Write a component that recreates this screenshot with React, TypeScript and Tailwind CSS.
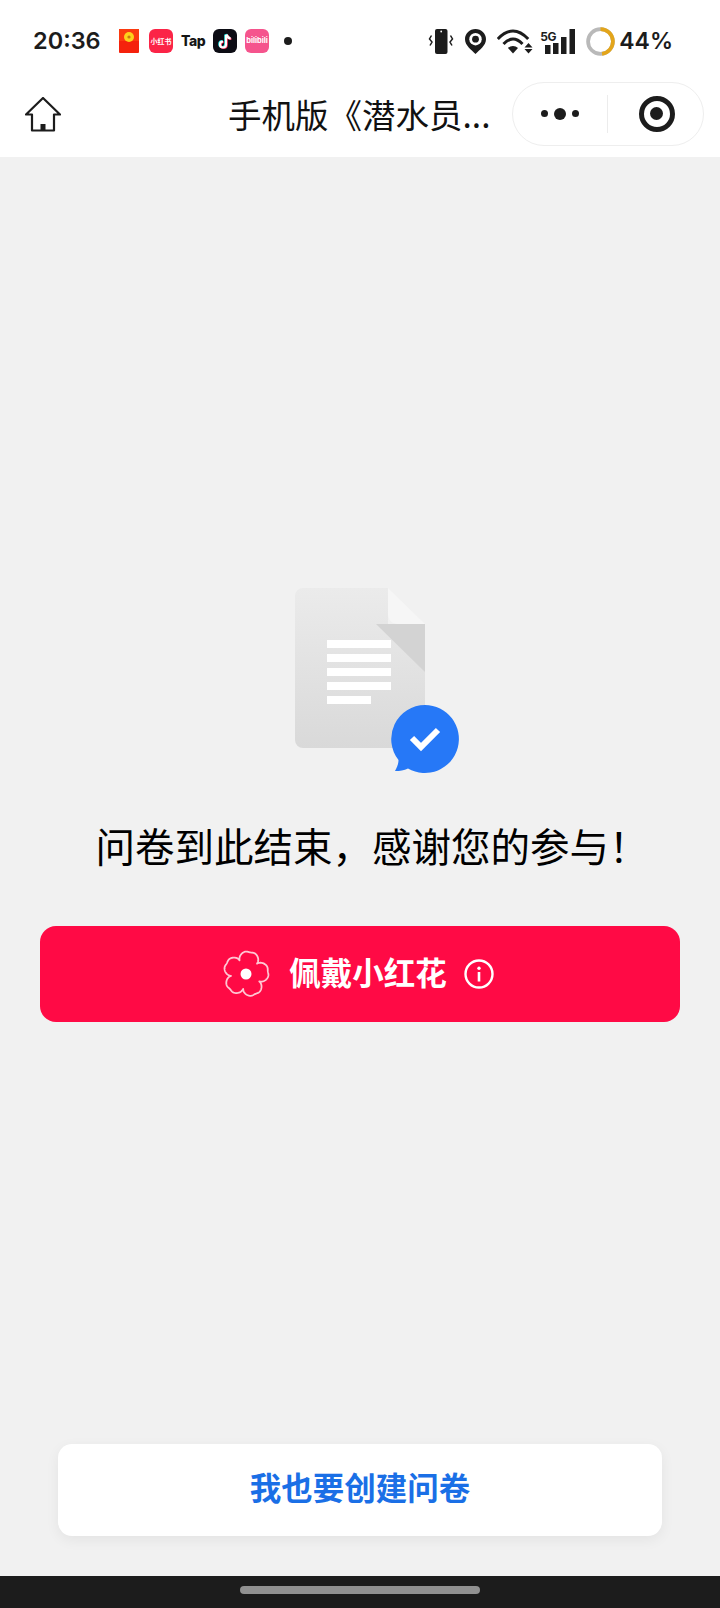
const flowerPath = (() => {
  const pts: string[] = [];
  const c = 24;
  const start = (-79 * Math.PI) / 180;
  const step = (2 * Math.PI) / 5;
  for (let i = 0; i < 300; i++) {
    const t = (i / 300) * 2 * Math.PI;
    const rel = t - start;
    const phi = rel - Math.round(rel / step) * step;
    const bump = Math.pow(Math.cos((phi / step) * Math.PI), 0.55);
    const dent = 1.3 * Math.exp(-Math.pow(phi / 0.16, 2));
    const r = 14.5 + 8.8 * bump - dent;
    pts.push(`${(c + r * Math.cos(t)).toFixed(2)} ${(c + r * Math.sin(t)).toFixed(2)}`);
  }
  return `M${pts.join("L")}Z`;
})();

export default function App() {
  return (
    <div className="w-[720px] h-[1608px] flex flex-col bg-[#f1f1f1] font-['Noto_Sans_CJK_SC',sans-serif] text-black overflow-hidden">
      {/* status bar */}
      <div className="h-[72px] bg-white flex items-center pt-[10px] pl-[33px] pr-[47px] font-['Inter',sans-serif] text-[#1c1c1c]">
        <span className="text-[23.5px] leading-none font-semibold w-[86px]">20:36</span>
        <svg width="20" height="24" viewBox="0 0 20 24" className="mr-[10px]">
          <rect x="0" y="0" width="20" height="24" rx="1" fill="#f5220c" />
          <rect x="0" y="0" width="20" height="12" fill="#fb3a10" />
          <circle cx="10" cy="8" r="5" fill="#fcd21c" />
          <circle cx="10" cy="8" r="1.6" fill="#c97a10" />
        </svg>
        <div className="w-[24px] h-[24px] rounded-[6px] bg-[#fb2447] text-white text-[7px] font-bold leading-none flex items-center justify-center font-['Noto_Sans_CJK_SC',sans-serif] mr-[8px]">小红书</div>
        <span className="w-[24px] text-[14px] font-extrabold leading-none text-[#151515] tracking-[-0.5px] mr-[8px]">Tap</span>
        <svg width="24" height="24" viewBox="0 0 24 24" className="mr-[8px]">
          <rect width="24" height="24" rx="6" fill="#0c0c14" />
          <path d="M13 6v9.500a3 3 0 1 1-3-3" fill="none" stroke="#25e4e4" strokeWidth="2.200" transform="translate(-.7 -.5)" />
          <path d="M13.700 5.500c.3 2.400 1.700 3.800 4 4" fill="none" stroke="#25e4e4" strokeWidth="2.200" transform="translate(-.7 -.5)" />
          <path d="M13 6v9.500a3 3 0 1 1-3-3" fill="none" stroke="#fe2c55" strokeWidth="2.200" transform="translate(.7 .5)" />
          <path d="M13.700 5.500c.3 2.400 1.700 3.800 4 4" fill="none" stroke="#fe2c55" strokeWidth="2.200" transform="translate(.7 .5)" />
          <path d="M13 6v9.500a3 3 0 1 1-3-3" fill="none" stroke="#fff" strokeWidth="2.200" />
          <path d="M13.700 5.500c.3 2.400 1.700 3.800 4 4" fill="none" stroke="#fff" strokeWidth="2.200" />
        </svg>
        <div className="w-[24px] h-[24px] rounded-[6px] bg-[#f5548d] text-white text-[7.5px] font-bold leading-none flex items-center justify-center">bilibili</div>
        <div className="w-[8px] h-[8px] rounded-full bg-[#1c1c1c] ml-[15px]" />
        <div className="flex-1" />
        <svg width="26" height="25" viewBox="0 0 26 25" className="mr-[11px]">
          <rect x="7" y="0" width="12.500" height="25" rx="2" fill="#1c1c1c" />
          <circle cx="13.200" cy="2.500" r="0.900" fill="#fff" />
          <path d="M3.500 6.500 1.500 10l2.500 3-2 3.500M22.500 6.500l2 3.500-2.500 3 2 3.500" fill="none" stroke="#1c1c1c" strokeWidth="1.500" />
        </svg>
        <svg width="21" height="25" viewBox="0 0 21 25" className="mr-[11px]">
          <path d="M10.500 0C4.700 0 0 4.500 0 10.200 0 16.500 6.500 20.800 10.500 25c4-4.200 10.500-8.500 10.500-14.800C21 4.500 16.300 0 10.500 0z" fill="#1c1c1c" />
          <circle cx="10.500" cy="10.200" r="6.200" fill="#fff" />
          <circle cx="10.500" cy="10.200" r="3.400" fill="#1c1c1c" />
        </svg>
        <svg width="36" height="25" viewBox="0 0 36 25" className="mr-[7px]">
          <path d="M0.800 10Q16-6 31.200 10" fill="none" stroke="#1c1c1c" strokeWidth="3" />
          <path d="M6.500 15Q16 5 25.500 15" fill="none" stroke="#1c1c1c" strokeWidth="3" />
          <path d="M11 19 16 24.500 21 19c-2.800-2.800-7.200-2.800-10 0z" fill="#1c1c1c" />
          <path d="M27.500 18.500 31.500 14l4 4.500zM27.500 20l4 4.500 4-4.500z" fill="#1c1c1c" />
        </svg>
        <div className="relative w-[35px] h-[25px] mr-[11px]">
          <span className="absolute left-0 top-[2px] text-[12px] font-bold leading-none tracking-[-0.5px]">5G</span>
          <svg width="35" height="25" viewBox="0 0 35 25" className="absolute left-0 top-0">
            <rect x="5" y="16" width="5.500" height="9" fill="#1c1c1c" />
            <rect x="13" y="14" width="5.500" height="11" fill="#1c1c1c" />
            <rect x="21" y="8" width="5.500" height="17" fill="#1c1c1c" />
            <rect x="29.500" y="0" width="5.500" height="25" fill="#1c1c1c" />
          </svg>
        </div>
        <svg width="29" height="29" viewBox="0 0 28 28" className="mr-[4px]">
          <circle cx="14" cy="14" r="12" fill="none" stroke="#b9b9b9" strokeWidth="3.600" />
          <path d="M14 2a12 12 0 0 1 1.500 23.900" fill="none" stroke="#e3a51a" strokeWidth="3.600" />
        </svg>
        <span className="text-[23px] leading-none font-semibold">44%</span>
      </div>

      {/* navigation bar */}
      <div className="h-[85px] bg-white flex items-center pl-[25px] pr-[16px] pb-[2px]">
        <svg width="36" height="35" viewBox="0 0 36 35" className="mt-[2px]">
          <path d="M18 1 1 17.500h6V33.500h22V17.500h6z" fill="none" stroke="#1c1c1c" strokeWidth="2.200" strokeLinejoin="round" />
          <rect x="15.500" y="27" width="5" height="6.500" fill="#1c1c1c" />
        </svg>
        <span className="ml-[167px] w-[284px] text-[33.5px] leading-none whitespace-nowrap mt-[1px] text-[#111]">手机版《潜水员...</span>
        <div className="flex-1" />
        <div className="w-[192px] h-[64px] rounded-full border border-[#eeeeee] bg-white flex items-center">
          <div className="w-[94px] flex items-center justify-center gap-[6px]">
            <div className="w-[7px] h-[7px] rounded-full bg-[#1c1c1c]" />
            <div className="w-[12px] h-[12px] rounded-full bg-[#1c1c1c]" />
            <div className="w-[7px] h-[7px] rounded-full bg-[#1c1c1c]" />
          </div>
          <div className="w-px h-[38px] bg-[#ececec]" />
          <div className="flex-1 flex justify-center pl-[2px]">
            <div className="w-[36px] h-[36px] rounded-full border-[5px] border-[#1c1c1c] flex items-center justify-center">
              <div className="w-[13px] h-[13px] rounded-full bg-[#1c1c1c]" />
            </div>
          </div>
        </div>
      </div>

      {/* content */}
      <div className="flex-1 flex flex-col items-center pt-[423px]">
        <svg width="200" height="200" viewBox="260 580 200 200">
          <defs>
            <linearGradient id="doc" x1="0" y1="0" x2="0" y2="1">
              <stop offset="0" stopColor="#ebebeb" />
              <stop offset="1" stopColor="#d9d9d9" />
            </linearGradient>
          </defs>
          <path d="M303 588h85v36h37v116a8 8 0 0 1-8 8H303a8 8 0 0 1-8-8V596a8 8 0 0 1 8-8z" fill="url(#doc)" />
          <path d="M388 588l37 36h-27c-6 0-10-4-10-10z" fill="#f6f6f6" />
          <path d="M376 624h49v48z" fill="#d3d3d3" />
          <rect x="327" y="640" width="64" height="8" fill="#fff" />
          <rect x="327" y="654" width="64" height="8" fill="#fff" />
          <rect x="327" y="668" width="64" height="8" fill="#fff" />
          <rect x="327" y="682" width="64" height="8" fill="#fff" />
          <rect x="327" y="696" width="44" height="8" fill="#fff" />
          <g transform="translate(1 1)">
            <path d="M424 704a34 34 0 1 1-17 63.500c-4 2-8 2.500-13 2.500 2-3.500 3.500-7 3.500-11A34 34 0 0 1 424 704z" fill="#2678f7" />
            <path d="M411 737l9 9 17-17" fill="none" stroke="#fff" strokeWidth="6" />
          </g>
        </svg>
        <div className="mt-[40px] ml-[24px] h-[50px] text-[39.5px] leading-[50px] whitespace-nowrap">问卷到此结束，感谢您的参与！</div>
        <div className="mt-[56px] w-[640px] h-[96px] rounded-[16px] bg-[#ff0a45] flex items-center justify-center pr-[4px] text-white">
          <svg width="48" height="48" viewBox="0 0 48 48" className="mr-[19px]">
            <path d={flowerPath} fill="none" stroke="#ffc7d3" strokeWidth="1.800" strokeLinejoin="round" />
            <circle cx="24" cy="24" r="5.500" fill="#fff" />
          </svg>
          <span className="text-[31.5px] leading-none font-bold mb-[4px]">佩戴小红花</span>
          <svg width="30" height="30" viewBox="0 0 30 30" className="ml-[17px]">
            <circle cx="15" cy="15" r="13.500" fill="none" stroke="#fff" strokeWidth="2.400" />
            <rect x="13.700" y="13" width="2.600" height="9.500" fill="#fff" />
            <circle cx="15" cy="9.300" r="1.700" fill="#fff" />
          </svg>
        </div>
        <div className="mt-auto mb-[40px] w-[604px] h-[92px] rounded-[14px] bg-white shadow-[0_4px_14px_rgba(0,0,0,0.06)] flex items-center justify-center pb-[6px] text-[31.5px] leading-none font-bold text-[#1a6fe6]">
          我也要创建问卷
        </div>
      </div>

      {/* gesture bar */}
      <div className="h-[32px] bg-[#1c1c1c] flex justify-center pt-[10px]">
        <div className="w-[240px] h-[8px] rounded-full bg-[#919191]" />
      </div>
    </div>
  );
}
